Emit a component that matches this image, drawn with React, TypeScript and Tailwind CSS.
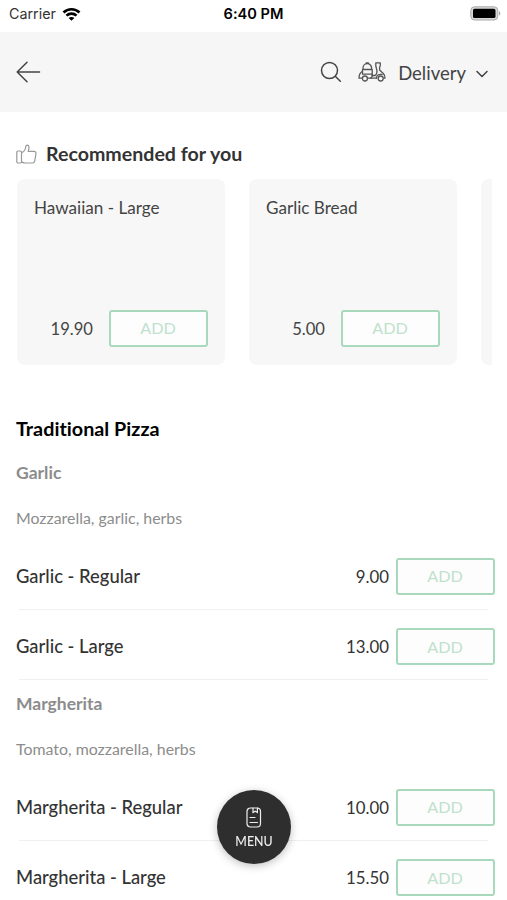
const recommended = [
  { name: 'Hawaiian - Large', price: '19.90' },
  { name: 'Garlic Bread', price: '5.00' },
]

const groups = [
  {
    name: 'Garlic',
    description: 'Mozzarella, garlic, herbs',
    items: [
      { name: 'Garlic - Regular', price: '9.00' },
      { name: 'Garlic - Large', price: '13.00' },
    ],
  },
  {
    name: 'Margherita',
    description: 'Tomato, mozzarella, herbs',
    items: [
      { name: 'Margherita - Regular', price: '10.00' },
      { name: 'Margherita - Large', price: '15.50' },
    ],
  },
]

function AddButton() {
  return (
    <button className="h-[37px] w-[99px] shrink-0 rounded-[3px] border-2 border-[#a9d9bc] bg-[#fdfdfd] pr-px text-[16.2px] leading-none tracking-[-0.1px] text-[#bfe1cd]">
      ADD
    </button>
  )
}

function StatusBar() {
  return (
    <div className="flex h-8 items-start justify-between pt-[5px] pr-[6px] pl-[9px] font-['Inter','Liberation_Sans',sans-serif] text-black">
      <div className="flex w-[120px] items-center gap-[6px]">
        <span className="text-[14.3px] leading-[18px] text-[#333]">Carrier</span>
        <svg width="19" height="15" viewBox="0 0 20 15" fill="none" stroke="currentColor" strokeWidth="2.8">
          <path d="M1.6 5.4a12 12 0 0 1 16.8 0" />
          <path d="M4.7 8.7a7.6 7.6 0 0 1 10.6 0" />
          <path d="M10 14.2 7 11.3a4.2 4.2 0 0 1 6 0z" fill="currentColor" stroke="none" />
        </svg>
      </div>
      <span className="-ml-[3px] text-[14.6px] leading-[18px] font-semibold">6:40 PM</span>
      <div className="flex w-[120px] justify-end pt-px">
        <svg width="31" height="15" viewBox="0 0 31 15">
          <rect x="0.8" y="0.8" width="27" height="13.2" rx="3.8" fill="#d8d8d8" stroke="#aaa" />
          <rect x="3" y="2.8" width="22.5" height="9.2" rx="1.6" fill="#000" />
          <path d="M29 5c1.8.8 1.8 4 0 4.8z" fill="#aaa" />
        </svg>
      </div>
    </div>
  )
}

function Header() {
  return (
    <header className="flex h-20 items-center bg-[#f6f6f6] pr-[19px] pl-4 text-[#444]">
      <svg width="25" height="22" viewBox="0 0 25 22" fill="none" stroke="currentColor" strokeWidth="1.5" strokeLinecap="round" strokeLinejoin="round">
        <path d="M11 1.2 1.2 11 11 20.8M1.2 11H23.5" />
      </svg>
      <div className="ml-auto flex items-center">
        <svg width="22" height="22" viewBox="0 0 22 22" fill="none" stroke="currentColor" strokeWidth="1.5" strokeLinecap="round">
          <circle cx="9.5" cy="9.5" r="8" />
          <path d="m15.3 15.3 5 5" />
        </svg>
        <Scooter />
        <span className="ml-[12px] pt-px text-[18.5px] leading-6">Delivery</span>
        <svg className="mt-[3px] ml-[10px]" width="12" height="8" viewBox="0 0 12 8" fill="none" stroke="currentColor" strokeWidth="1.5" strokeLinecap="round" strokeLinejoin="round">
          <path d="m1 1.5 5 5 5-5" />
        </svg>
      </div>
    </header>
  )
}

function Scooter() {
  return (
    <svg className="ml-[16px]" width="28" height="20" viewBox="0 0 28 20" fill="none" stroke="#555" strokeWidth="1.3" strokeLinecap="round" strokeLinejoin="round">
      {/* delivery box and rear body */}
      <path d="M5 7.500V6a4.300 4.300 0 0 1 8.600 0v1.500M8.200 1.800V1h2.200v.8M4.500 7.500h9.700v4.700H4.500z" />
      <path d="M4.200 9.500C2 10.800 1 13.300 1 16.200h3.300M14.200 12.200v2.300l-1.500 1.700" />
      {/* footboard and front shield */}
      <path d="M9.500 16.200h9M14.200 13.500h3c1.800-1.800 2.200-3.800 1.400-6.500l-.8-3V.8h4.500V4l-.7 1v3l3.700 3.500c1.300 1.300 1.900 3 1.700 4.700h-1" />
      <path d="M18.500 16.200c0-2.800 2-4.300 5.500-3.800" />
      <circle cx="6.900" cy="16.500" r="2.500" />
      <circle cx="22.700" cy="16.500" r="2.500" />
    </svg>
  )
}

function Recommended() {
  return (
    <section className="pt-[30px] pl-4">
      <h2 className="flex h-6 items-center gap-[9px] text-[19.6px] font-bold text-[#333]">
        <svg width="21" height="20" viewBox="0 0 21 20" fill="none" stroke="#999" strokeWidth="1.2" strokeLinejoin="round">
          <rect x="0.8" y="7" width="4.7" height="12" rx="1.2" />
          <path d="M5.5 8.8c2.5-1 4-3.3 4.3-6.3.2-1.8 2.9-1.8 3.1.3.2 1.5-.2 3-.7 4.6h5.8c1.5 0 2.2 1 2 2.2l-1.3 7.5c-.3 1.3-1 1.9-2.2 1.9H9c-1.5 0-2.3-.5-3.5-1.2" />
        </svg>
        Recommended for you
      </h2>
      <div className="mt-[13px] mr-[15px] flex gap-6 overflow-hidden pl-px">
        {recommended.map((item) => (
          <div key={item.name} className="flex h-[186px] w-[208px] shrink-0 flex-col justify-between rounded-[8px] bg-[#f7f7f7] pt-[17px] pr-[17px] pb-[18px] pl-[17px]">
            <span className="text-[17.1px] leading-6 text-[#444]">{item.name}</span>
            <div className="flex items-center justify-end gap-4">
              <span className="pt-px text-[16.6px] text-[#444]">{item.price}</span>
              <AddButton />
            </div>
          </div>
        ))}
        <div className="h-[186px] w-[208px] shrink-0 rounded-[8px] bg-[#f7f7f7]" />
      </div>
    </section>
  )
}

function MenuButton() {
  return (
    <button className="fixed top-[790px] left-[217px] flex h-[74px] w-[74px] flex-col items-center rounded-full bg-[#2e2e2e] pt-[17px] text-[#eee] shadow-[0_2px_8px_rgba(0,0,0,0.25)]">
      <svg width="16" height="21" viewBox="0 0 16 21" fill="none" stroke="currentColor" strokeWidth="1.2" strokeLinecap="round">
        <rect x="1" y="1" width="13.5" height="19" rx="3.5" />
        <path d="M7 1v4.5l2.2-1.3 2.2 1.3V1M4 10.5h5M4 15.5h7.5" />
      </svg>
      <span className="mt-[6px] text-[12.4px] leading-4 font-medium">MENU</span>
    </button>
  )
}

export default function App() {
  return (
    <div className="h-[900px] overflow-hidden bg-white font-['Lato','Liberation_Sans',sans-serif] [font-variant-ligatures:none]">
      <StatusBar />
      <Header />
      <Recommended />
      <main className="pt-[51px]">
        <h2 className="h-[33px] pl-4 text-[19.8px] leading-[25px] font-bold text-black">Traditional Pizza</h2>
        {groups.map((group) => (
          <section key={group.name}>
            <h3 className="pl-4 text-[17.5px] leading-[47px] font-bold text-[#8c8c8c]">{group.name}</h3>
            <p className="pl-4 text-[15.9px] leading-[43px] text-[#8c8c8c]">{group.description}</p>
            {group.items.map((item) => (
              <div key={item.name} className="h-[70.5px] pr-3 pl-4">
                <div className="flex h-[69.5px] items-center pt-[5px]">
                  <span className="pt-px text-[18.4px] font-medium text-[#333]">{item.name}</span>
                  <span className="mr-[7px] ml-auto text-[16.8px] text-[#333]">{item.price}</span>
                  <AddButton />
                </div>
                <div className="mr-[7px] ml-[3px] h-px bg-[#f0f0f0]" />
              </div>
            ))}
          </section>
        ))}
      </main>
      <MenuButton />
    </div>
  )
}
